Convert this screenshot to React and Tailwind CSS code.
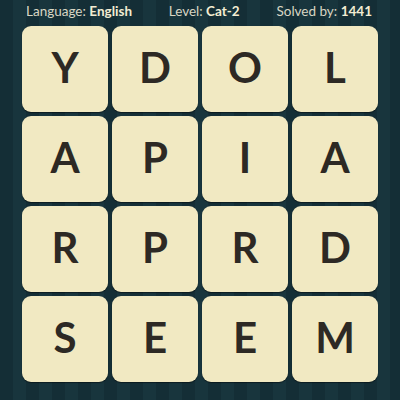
import React from "react";

const rows = [
  ["Y", "D", "O", "L"],
  ["A", "P", "I", "A"],
  ["R", "P", "R", "D"],
  ["S", "E", "E", "M"],
];

export default function App() {
  return (
    <div
      className="w-[400px] h-[400px] overflow-hidden bg-[repeating-linear-gradient(90deg,#142e36_0px,#142e36_13px,#18353d_13px,#18353d_26px)] flex flex-col"
      style={{ fontFamily: "Lato, 'Liberation Sans', sans-serif" }}
    >
      <div className="h-[26px] flex items-center justify-between pl-[26px] pr-[28px] text-[13.5px] leading-none pb-[2px]">
        <div className="text-[#d9d6c4]">
          Language: <span className="font-bold text-[#f3edd3]">English</span>
        </div>
        <div className="text-[#d9d6c4]">
          Level: <span className="font-bold text-[#f3edd3]">Cat-2</span>
        </div>
        <div className="text-[#d9d6c4]">
          Solved by: <span className="font-bold text-[#f3edd3]">1441</span>
        </div>
      </div>
      <div className="ml-[22px] grid grid-cols-[repeat(4,86px)] grid-rows-[repeat(4,86px)] gap-[4px]">
        {rows.flat().map((l, i) => (
          <div
            key={i}
            className="rounded-[9px] bg-[#f1e9c2] shadow-[0_1px_1px_rgba(0,0,0,0.45)] flex items-center justify-center pb-[4px] text-[42px] font-bold text-[#2d2924] leading-none"
          >
            {l}
          </div>
        ))}
      </div>
    </div>
  );
}
